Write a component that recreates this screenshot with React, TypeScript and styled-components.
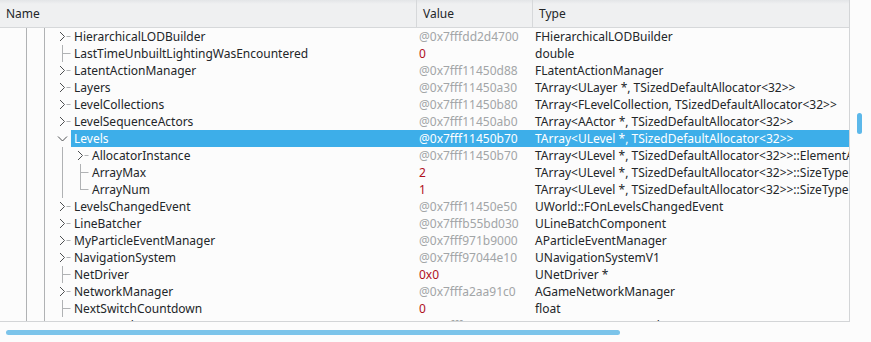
import React from 'react';
import styled, { createGlobalStyle } from 'styled-components';

const GlobalStyle = createGlobalStyle`
  html, body { margin: 0; padding: 0; background: #fcfcfc; }
  body {
    font-family: "Noto Sans", "DejaVu Sans", sans-serif;
    font-size: 12px;
    color: #232629;
  }
`;

const NAME_W = 416;
const VALUE_W = 116;

const Frame = styled.div`
  width: 871px;
  height: 342px;
  display: grid;
  grid-template-columns: 850px 21px;
  grid-template-rows: 322px 20px;
  background: #fcfcfc;
  overflow: hidden;
`;

const Viewport = styled.div`
  border-right: 1px solid #d3d5d7;
  border-bottom: 1px solid #d3d5d7;
  overflow: hidden;
  display: flex;
  flex-direction: column;
`;

const HeaderBar = styled.div`
  flex: none;
  height: 27px;
  display: grid;
  grid-template-columns: ${NAME_W}px ${VALUE_W}px 1fr;
  border-bottom: 1px solid #d6d8da;
  background: linear-gradient(#e3e5e7 0px, #eff0f1 4px, #eff0f1 100%);
`;

const HeaderCell = styled.div<{ $sep?: boolean }>`
  padding-left: 6px;
  line-height: 27px;
  white-space: nowrap;
  overflow: hidden;
  color: #232629;
  border-left: ${(p) => (p.$sep ? '1px solid #d6d8da' : 'none')};
`;

const Rows = styled.div`
  flex: 1;
  display: flex;
  flex-direction: column;
  overflow: hidden;
`;

const Row = styled.div`
  flex: none;
  height: 17px;
  display: flex;
`;

const BranchSvg = styled.svg`
  flex: none;
  display: block;
`;

const RowBody = styled.div<{ $selected: boolean; $nameW: number }>`
  flex: 1;
  min-width: 0;
  display: grid;
  grid-template-columns: ${(p) => p.$nameW}px ${VALUE_W}px 1fr;
  background: ${(p) => (p.$selected ? '#3daee9' : 'transparent')};
  color: ${(p) => (p.$selected ? '#ffffff' : '#232629')};
`;

const Cell = styled.div`
  padding-left: 3px;
  line-height: 17px;
  white-space: nowrap;
  overflow: hidden;
`;

const ValueCell = styled(Cell)<{ $kind: 'addr' | 'num'; $selected: boolean }>`
  color: ${(p) =>
    p.$selected ? '#ffffff' : p.$kind === 'addr' ? '#a2a5a7' : '#b0101c'};
`;

const VScroll = styled.div`
  padding-top: 113px;
  padding-left: 7px;
`;

const VThumb = styled.div`
  width: 5px;
  height: 21px;
  border-radius: 3px;
  background: #5cb8ea;
`;

const HScroll = styled.div`
  padding-top: 8px;
  padding-left: 6px;
`;

const HThumb = styled.div`
  width: 614px;
  height: 5px;
  border-radius: 3px;
  background: #7cc4ea;
`;

const Corner = styled.div``;

type Kind = 'collapsed' | 'expanded' | 'leaf';

interface Item {
  name: string;
  value: string;
  vk: 'addr' | 'num';
  type: string;
  depth: 0 | 1;
  kind: Kind;
  last?: boolean;
  selected?: boolean;
}

const items: Item[] = [
  { name: 'HierarchicalLODBuilder', value: '@0x7fffdd2d4700', vk: 'addr', type: 'FHierarchicalLODBuilder', depth: 0, kind: 'collapsed' },
  { name: 'LastTimeUnbuiltLightingWasEncountered', value: '0', vk: 'num', type: 'double', depth: 0, kind: 'leaf' },
  { name: 'LatentActionManager', value: '@0x7fff11450d88', vk: 'addr', type: 'FLatentActionManager', depth: 0, kind: 'collapsed' },
  { name: 'Layers', value: '@0x7fff11450a30', vk: 'addr', type: 'TArray<ULayer *, TSizedDefaultAllocator<32>>', depth: 0, kind: 'collapsed' },
  { name: 'LevelCollections', value: '@0x7fff11450b80', vk: 'addr', type: 'TArray<FLevelCollection, TSizedDefaultAllocator<32>>', depth: 0, kind: 'collapsed' },
  { name: 'LevelSequenceActors', value: '@0x7fff11450ab0', vk: 'addr', type: 'TArray<AActor *, TSizedDefaultAllocator<32>>', depth: 0, kind: 'collapsed' },
  { name: 'Levels', value: '@0x7fff11450b70', vk: 'addr', type: 'TArray<ULevel *, TSizedDefaultAllocator<32>>', depth: 0, kind: 'expanded', selected: true },
  { name: 'AllocatorInstance', value: '@0x7fff11450b70', vk: 'addr', type: 'TArray<ULevel *, TSizedDefaultAllocator<32>>::ElementAllocatorType', depth: 1, kind: 'collapsed' },
  { name: 'ArrayMax', value: '2', vk: 'num', type: 'TArray<ULevel *, TSizedDefaultAllocator<32>>::SizeType', depth: 1, kind: 'leaf' },
  { name: 'ArrayNum', value: '1', vk: 'num', type: 'TArray<ULevel *, TSizedDefaultAllocator<32>>::SizeType', depth: 1, kind: 'leaf', last: true },
  { name: 'LevelsChangedEvent', value: '@0x7fff11450e50', vk: 'addr', type: 'UWorld::FOnLevelsChangedEvent', depth: 0, kind: 'collapsed' },
  { name: 'LineBatcher', value: '@0x7fffb55bd030', vk: 'addr', type: 'ULineBatchComponent', depth: 0, kind: 'collapsed' },
  { name: 'MyParticleEventManager', value: '@0x7fff971b9000', vk: 'addr', type: 'AParticleEventManager', depth: 0, kind: 'collapsed' },
  { name: 'NavigationSystem', value: '@0x7fff97044e10', vk: 'addr', type: 'UNavigationSystemV1', depth: 0, kind: 'collapsed' },
  { name: 'NetDriver', value: '0x0', vk: 'num', type: 'UNetDriver *', depth: 0, kind: 'leaf' },
  { name: 'NetworkManager', value: '@0x7fffa2aa91c0', vk: 'addr', type: 'AGameNetworkManager', depth: 0, kind: 'collapsed' },
  { name: 'NextSwitchCountdown', value: '0', vk: 'num', type: 'float', depth: 0, kind: 'leaf' },
  { name: 'NextTravelType', value: '@0x7fff11451001', vk: 'addr', type: 'TEnumAsByte<ETravelType>', depth: 0, kind: 'collapsed' },
];

const LINE = '#b0b2b4';
const ARROW = '#4d4f51';

function Branch({ item }: { item: Item }) {
  const width = 71 + item.depth * 18;
  const cx = 62.5 + item.depth * 18;
  const ancestors = item.depth === 1 ? [26.5, 44.5, 62.5] : [26.5, 44.5];
  return (
    <BranchSvg width={width} height={17} viewBox={`0 0 ${width} 17`}>
      {ancestors.map((x) => (
        <line key={x} x1={x} y1={0} x2={x} y2={17} stroke={LINE} strokeWidth={1} />
      ))}
      {item.kind === 'leaf' && (
        <>
          <line x1={cx} y1={0} x2={cx} y2={item.last ? 9 : 17} stroke={LINE} strokeWidth={1} />
          <line x1={cx} y1={8.5} x2={cx + 8} y2={8.5} stroke={LINE} strokeWidth={1} />
        </>
      )}
      {item.kind === 'collapsed' && (
        <>
          <polyline
            points={`${cx - 2.5},4 ${cx + 2},8.5 ${cx - 2.5},13`}
            fill="none"
            stroke={ARROW}
            strokeWidth={1}
          />
          <line x1={cx + 4} y1={8.5} x2={cx + 8} y2={8.5} stroke={LINE} strokeWidth={1} />
        </>
      )}
      {item.kind === 'expanded' && (
        <polyline
          points={`${cx - 4.5},6.5 ${cx},11 ${cx + 4.5},6.5`}
          fill="none"
          stroke={ARROW}
          strokeWidth={1}
        />
      )}
    </BranchSvg>
  );
}

function TreeRow({ item }: { item: Item }) {
  const branchW = 71 + item.depth * 18;
  const sel = !!item.selected;
  return (
    <Row>
      <Branch item={item} />
      <RowBody $selected={sel} $nameW={NAME_W - branchW}>
        <Cell>{item.name}</Cell>
        <ValueCell $kind={item.vk} $selected={sel}>
          {item.value}
        </ValueCell>
        <Cell>{item.type}</Cell>
      </RowBody>
    </Row>
  );
}

export default function App() {
  return (
    <>
      <GlobalStyle />
      <Frame>
        <Viewport>
          <HeaderBar>
            <HeaderCell>Name</HeaderCell>
            <HeaderCell $sep>Value</HeaderCell>
            <HeaderCell $sep>Type</HeaderCell>
          </HeaderBar>
          <Rows>
            {items.map((it, i) => (
              <TreeRow key={i} item={it} />
            ))}
          </Rows>
        </Viewport>
        <VScroll>
          <VThumb />
        </VScroll>
        <HScroll>
          <HThumb />
        </HScroll>
        <Corner />
      </Frame>
    </>
  );
}
